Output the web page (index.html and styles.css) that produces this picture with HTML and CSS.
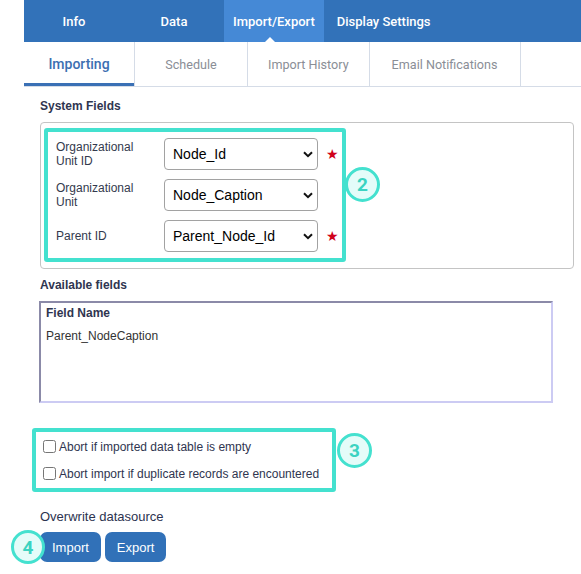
FILE: index.html
```html
<!DOCTYPE html>
<html>
<head>
<meta charset="utf-8">
<link rel="stylesheet" href="styles.css">
</head>
<body>
<div class="page">
  <nav class="topnav">
    <div class="tab">Info</div>
    <div class="tab">Data</div>
    <div class="tab active">Import/Export</div>
    <div class="tab">Display Settings</div>
  </nav>
  <div class="subtabs">
    <div class="subtab active">Importing</div>
    <div class="subtab">Schedule</div>
    <div class="subtab">Import History</div>
    <div class="subtab">Email Notifications</div>
  </div>
  <div class="content">
    <div class="section-title">System Fields</div>
    <div class="fieldset">
      <div class="highlight fields">
        <div class="row">
          <label class="lbl">Organizational Unit ID</label>
          <div class="select-wrap">
            <select class="sel"><option>Node_Id</option></select>
            <svg class="chev" width="10" height="7" viewBox="0 0 10 7"><path d="M1 1.2 L5 5.2 L9 1.2" fill="none" stroke="#111" stroke-width="2"/></svg>
          </div>
          <span class="star">★</span>
        </div>
        <div class="row">
          <label class="lbl">Organizational Unit</label>
          <div class="select-wrap">
            <select class="sel"><option>Node_Caption</option></select>
            <svg class="chev" width="10" height="7" viewBox="0 0 10 7"><path d="M1 1.2 L5 5.2 L9 1.2" fill="none" stroke="#111" stroke-width="2"/></svg>
          </div>
          <span class="star blank"></span>
        </div>
        <div class="row">
          <label class="lbl">Parent ID</label>
          <div class="select-wrap">
            <select class="sel"><option>Parent_Node_Id</option></select>
            <svg class="chev" width="10" height="7" viewBox="0 0 10 7"><path d="M1 1.2 L5 5.2 L9 1.2" fill="none" stroke="#111" stroke-width="2"/></svg>
          </div>
          <span class="star">★</span>
        </div>
        <div class="badge badge-2">2</div>
      </div>
    </div>
    <div class="section-title avail">Available fields</div>
    <div class="listbox">
      <div class="list-head">Field Name</div>
      <div class="list-item">Parent_NodeCaption</div>
    </div>
    <div class="highlight checks">
      <label class="check"><input type="checkbox"><span>Abort if imported data table is empty</span></label>
      <label class="check"><input type="checkbox"><span>Abort import if duplicate records are encountered</span></label>
      <div class="badge badge-3">3</div>
    </div>
    <div class="overwrite">Overwrite datasource</div>
    <div class="actions">
      <button class="btn">Import</button>
      <button class="btn">Export</button>
      <div class="badge badge-4">4</div>
    </div>
  </div>
</div>
</body>
</html>
```
FILE: styles.css
```css
html, body {
  margin: 0;
  padding: 0;
  background: #ffffff;
}
body {
  font-family: "Liberation Sans", Arial, sans-serif;
  font-size: 12px;
  color: #333333;
}
.page {
  padding-left: 24px;
}
.topnav {
  display: flex;
  height: 42px;
  background: #3272b9;
  font-family: Roboto, "Liberation Sans", sans-serif;
  font-size: 13px;
  font-weight: 500;
  color: #ffffff;
}
.tab {
  position: relative;
  min-width: 80px;
  padding: 0 10px;
  display: flex;
  align-items: center;
  justify-content: center;
}
.tab:nth-child(1) { width: 79px; }
.tab:nth-child(2) { width: 80px; }
.tab:nth-child(3) { padding: 0 9px; }
.tab:nth-child(4) { padding-left: 13px; }
.tab.active {
  background: #4589d6;
}
.tab.active::after {
  content: "";
  position: absolute;
  left: 50%;
  bottom: 0;
  margin-left: -9px;
  border-left: 5px solid transparent;
  border-right: 5px solid transparent;
  border-bottom: 5px solid #ffffff;
}
.subtabs {
  display: flex;
  height: 44px;
  border-bottom: 1px solid #d5dce7;
  font-family: Roboto, "Liberation Sans", sans-serif;
  font-size: 12.6px;
  color: #8a8e96;
}
.subtab {
  min-width: 72px;
  padding: 0 20px;
  display: flex;
  align-items: center;
  justify-content: center;
  border-right: 1px solid #d5dce7;
}
.subtab:nth-child(4) {
  padding: 0 22px;
}
.subtab.active {
  color: #3c6fb1;
  font-weight: 500;
  font-size: 14px;
  box-shadow: inset 0 -3px 0 #3a70b5;
  min-width: 70px;
}
.content {
  padding: 0 7px 20px 16px;
}
.section-title {
  font-weight: bold;
  color: #2f3550;
  line-height: 14px;
  margin-top: 12px;
}
.section-title.avail {
  margin-top: 9px;
}
.fieldset {
  margin-top: 9px;
  border: 1px solid #c4c4c4;
  border-radius: 4px;
  padding: 5px 3px 6px 3px;
}
.highlight {
  position: relative;
  border: 4px solid #44e1cf;
  border-radius: 3px;
}
.fields {
  width: 286px;
  padding: 6px 0 6px 8px;
  display: flex;
  flex-direction: column;
  gap: 9px;
}
.row {
  display: flex;
  align-items: center;
  height: 32px;
}
.lbl {
  width: 96px;
  margin-right: 12px;
  line-height: 14px;
  color: #333a4d;
}
.select-wrap {
  position: relative;
}
.sel {
  appearance: none;
  -webkit-appearance: none;
  width: 154px;
  height: 32px;
  border: 1px solid #a2a2a2;
  border-radius: 4px;
  background: #ffffff;
  padding: 0 0 0 8px;
  font-family: "Liberation Sans", Arial, sans-serif;
  font-size: 14px;
  color: #000000;
  margin: 0;
}
.chev {
  position: absolute;
  right: 5px;
  top: 13px;
  pointer-events: none;
}
.star {
  width: 12px;
  margin-left: 8px;
  color: #d0021b;
  font-size: 14px;
  font-family: "DejaVu Sans", sans-serif;
}
.badge {
  position: absolute;
  box-sizing: border-box;
  width: 35px;
  height: 35px;
  border-radius: 50%;
  border: 3px solid #44e1cf;
  background: #e4fcf9;
  color: #3bd3c1;
  font-family: Roboto, "Liberation Sans", sans-serif;
  font-weight: bold;
  font-size: 19px;
  display: flex;
  align-items: center;
  justify-content: center;
}
.badge-2 {
  left: 297px;
  top: 35px;
}
.listbox {
  margin-top: 9px;
  margin-left: -1px;
  width: 505px;
  height: 98px;
  border: 2px solid;
  border-color: #8b8aa8 #cccbf3 #cccbf3 #8b8aa8;
  padding: 0 0 0 5px;
}
.list-head {
  font-weight: bold;
  line-height: 20px;
  color: #2f3550;
}
.list-item {
  line-height: 20px;
  margin-top: 3px;
}
.checks {
  margin-top: 25px;
  margin-left: -8px;
  width: 296px;
  height: 56px;
  padding: 0;
}
.check {
  display: flex;
  align-items: center;
  height: 13px;
  margin-left: 7px;
  color: #2f3550;
}
.check:first-child {
  margin-top: 8px;
}
.check + .check {
  margin-top: 14px;
}
.check input {
  width: 13px;
  height: 13px;
  margin: 0 3px 0 0;
}
.badge-3 {
  left: 301px;
  top: 1px;
}
.overwrite {
  margin-top: 18px;
  line-height: 14px;
  font-size: 13px;
  color: #2c3350;
}
.actions {
  position: relative;
  display: flex;
  gap: 4px;
  margin-top: 8px;
}
.btn {
  height: 30px;
  padding: 0 12px;
  border: none;
  border-radius: 7px;
  background: #3171b8;
  color: #ffffff;
  font-family: "Liberation Sans", Arial, sans-serif;
  font-size: 13px;
  margin: 0;
}
.badge-4 {
  left: -29px;
  top: -2px;
  width: 34px;
  height: 34px;
}
```
